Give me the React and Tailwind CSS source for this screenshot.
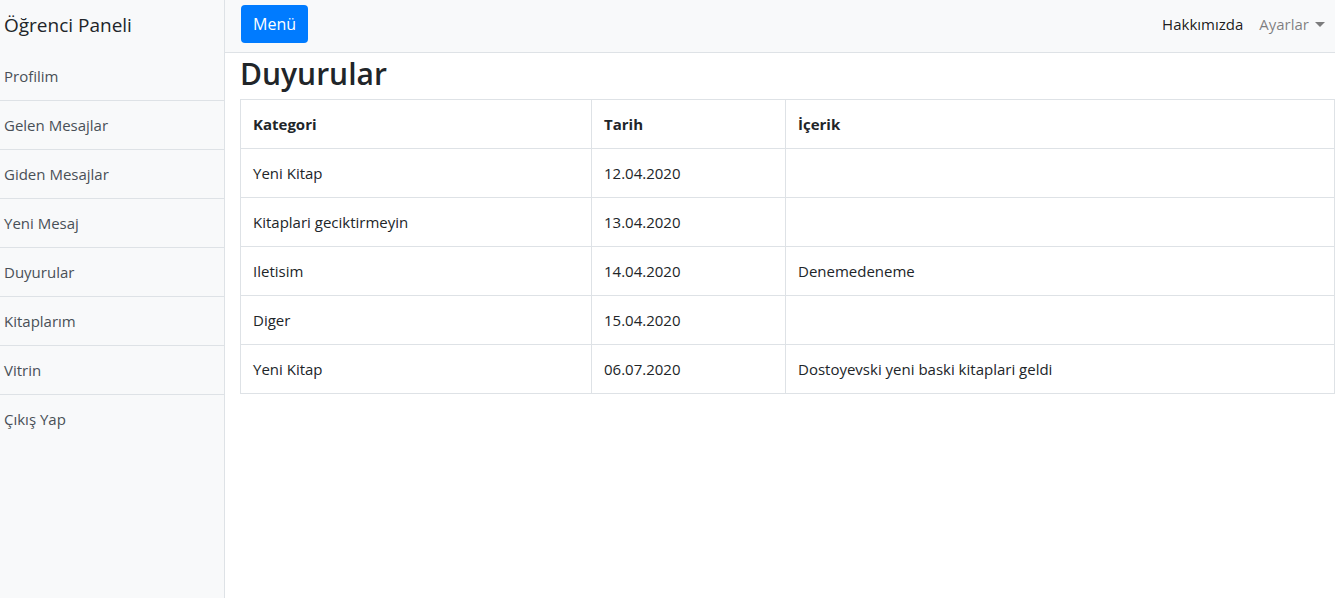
import React from "react";

const menu = [
  "Profilim",
  "Gelen Mesajlar",
  "Giden Mesajlar",
  "Yeni Mesaj",
  "Duyurular",
  "Kitaplarım",
  "Vitrin",
  "Çıkış Yap",
];

const rows = [
  ["Yeni Kitap", "12.04.2020", ""],
  ["Kitaplari geciktirmeyin", "13.04.2020", ""],
  ["Iletisim", "14.04.2020", "Denemedeneme"],
  ["Diger", "15.04.2020", ""],
  ["Yeni Kitap", "06.07.2020", "Dostoyevski yeni baski kitaplari geldi"],
];

export default function App() {
  return (
    <div
      className="flex h-[598px] w-[1335px] overflow-hidden bg-white text-[#212529]"
      style={{ fontFamily: '"Segoe UI", "Open Sans", "Noto Sans", sans-serif' }}
    >
      {/* Sidebar */}
      <div className="w-[225px] shrink-0 border-r border-[#dee2e6] bg-[#f8f9fa]">
        <div className="flex h-[51px] items-center pl-1 pb-[1px] text-[19px] text-[#212529]">
          Öğrenci Paneli
        </div>
        <div className="flex flex-col">
          {menu.map((item, i) => (
            <div
              key={item}
              className={`flex h-[49px] items-center pl-1 text-[15px] text-[#495057] ${
                i > 0 ? "border-t border-[#dee2e6]" : "pt-[1px]"
              }`}
            >
              {item}
            </div>
          ))}
        </div>
      </div>

      {/* Page content */}
      <div className="flex min-w-0 flex-1 flex-col">
        <nav className="flex h-[53px] shrink-0 items-start justify-between border-b border-[#dee2e6] bg-[#f8f9fa] pl-4 pr-[10px] pt-[5px]">
          <button className="h-[38px] rounded-[4px] bg-[#007bff] px-3 text-[16px] text-white">
            Menü
          </button>
          <div className="flex h-[38px] items-center gap-4 text-[15px]">
            <span className="text-[rgba(0,0,0,0.9)]">Hakkımızda</span>
            <span className="flex items-center gap-[6px] text-[rgba(0,0,0,0.5)]">
              Ayarlar
              <span className="inline-block h-0 w-0 border-x-[5px] border-t-[5px] border-x-transparent border-t-[rgba(0,0,0,0.5)]" />
            </span>
          </div>
        </nav>

        <div className="pl-[15px]">
          <h1 className="flex h-[46px] items-center pb-[5px] text-[30px] font-semibold leading-none">
            Duyurular
          </h1>
          <table className="w-[1095px] border-collapse text-[15px]">
            <thead>
              <tr className="h-[49px]">
                <th className="w-[351px] border border-[#dee2e6] px-3 text-left font-bold">
                  Kategori
                </th>
                <th className="w-[194px] border border-[#dee2e6] px-3 text-left font-bold">
                  Tarih
                </th>
                <th className="border border-[#dee2e6] px-3 text-left font-bold">
                  İçerik
                </th>
              </tr>
            </thead>
            <tbody>
              {rows.map((r, i) => (
                <tr key={i} className="h-[49px]">
                  {r.map((c, j) => (
                    <td key={j} className="border border-[#dee2e6] px-3">
                      {c}
                    </td>
                  ))}
                </tr>
              ))}
            </tbody>
          </table>
        </div>
      </div>
    </div>
  );
}
